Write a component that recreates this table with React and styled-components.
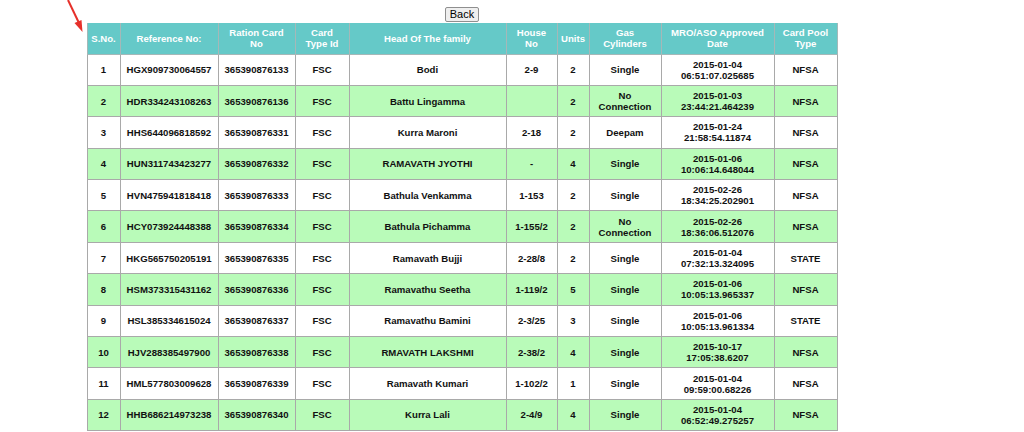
import styled, { createGlobalStyle } from 'styled-components'

const GlobalStyle = createGlobalStyle`
    body {
        margin: 0;
        background: #fff;
        font-family: "Liberation Sans", Arial, sans-serif;
    }
`

const Page = styled.div`
    position: relative;
    padding-top: 7px;
`
const Wrapper = styled.div`
    width: 750px;
    margin-left: 87px;
    display: flex;
    flex-direction: column;
    align-items: center;
`
const BackButton = styled.button`
    height: 15px;
    padding: 0 4px;
    margin-bottom: 1px;
    font-family: "Liberation Sans", Arial, sans-serif;
    font-size: 11px;
    line-height: 13px;
    color: #000;
    background: #efefef;
    border: 1px solid #8f8f8f;
    border-radius: 2px;
`
const Table = styled.table`
    width: 750px;
    table-layout: fixed;
    border-collapse: collapse;
    font-size: 9.6px;
    font-weight: bold;
    line-height: 11px;
`
const HeadRow = styled.tr`
    height: 31px;
    background: #65c9c8;
`
const Th = styled.th`
    padding: 0 2px;
    color: #fff;
    font-weight: bold;
    text-align: center;
    border: 1px solid #a5b8b8;
    border-top: none;
`
const Row = styled.tr`
    height: 31.4px;
    background: ${(p) => (p.$alt ? '#b9fbb9' : '#fff')};
`
const Td = styled.td`
    padding: 0 2px;
    color: #111;
    text-align: center;
    border: 1px solid #a9a9a9;
`
const Arrow = styled.svg`
    position: absolute;
    left: 60px;
    top: 0;
`

const widths = [33, 98, 77, 54, 157, 51, 32, 72, 113, 63]

const headers = [
    'S.No.',
    'Reference No:',
    ['Ration Card', 'No'],
    ['Card', 'Type Id'],
    'Head Of The family',
    ['House', 'No'],
    'Units',
    ['Gas', 'Cylinders'],
    ['MRO/ASO Approved', 'Date'],
    ['Card Pool', 'Type'],
]

const rows = [
    ['1', 'HGX909730064557', '365390876133', 'Bodi', '2-9', '2', 'Single', ['2015-01-04', '06:51:07.025685'], 'NFSA'],
    ['2', 'HDR334243108263', '365390876136', 'Battu Lingamma', '', '2', ['No', 'Connection'], ['2015-01-03', '23:44:21.464239'], 'NFSA'],
    ['3', 'HHS644096818592', '365390876331', 'Kurra Maroni', '2-18', '2', 'Deepam', ['2015-01-24', '21:58:54.11874'], 'NFSA'],
    ['4', 'HUN311743423277', '365390876332', 'RAMAVATH JYOTHI', '-', '4', 'Single', ['2015-01-06', '10:06:14.648044'], 'NFSA'],
    ['5', 'HVN475941818418', '365390876333', 'Bathula Venkamma', '1-153', '2', 'Single', ['2015-02-26', '18:34:25.202901'], 'NFSA'],
    ['6', 'HCY073924448388', '365390876334', 'Bathula Pichamma', '1-155/2', '2', ['No', 'Connection'], ['2015-02-26', '18:36:06.512076'], 'NFSA'],
    ['7', 'HKG565750205191', '365390876335', 'Ramavath Bujji', '2-28/8', '2', 'Single', ['2015-01-04', '07:32:13.324095'], 'STATE'],
    ['8', 'HSM373315431162', '365390876336', 'Ramavathu Seetha', '1-119/2', '5', 'Single', ['2015-01-06', '10:05:13.965337'], 'NFSA'],
    ['9', 'HSL385334615024', '365390876337', 'Ramavathu Bamini', '2-3/25', '3', 'Single', ['2015-01-06', '10:05:13.961334'], 'STATE'],
    ['10', 'HJV288385497900', '365390876338', 'RMAVATH LAKSHMI', '2-38/2', '4', 'Single', ['2015-10-17', '17:05:38.6207'], 'NFSA'],
    ['11', 'HML577803009628', '365390876339', 'Ramavath Kumari', '1-102/2', '1', 'Single', ['2015-01-04', '09:59:00.68226'], 'NFSA'],
    ['12', 'HHB686214973238', '365390876340', 'Kurra Lali', '2-4/9', '4', 'Single', ['2015-01-04', '06:52:49.275257'], 'NFSA'],
]

// two-line cells are given as arrays
function Lines({ value }) {
    if (!Array.isArray(value)) return value
    return value.map((line, i) => (
        <span key={i}>
            {i > 0 && <br />}
            {line}
        </span>
    ))
}

function App() {
    return (
        <Page>
            <GlobalStyle />
            <Arrow width="30" height="40" viewBox="0 0 30 40">
                <line x1="8" y1="0" x2="18.5" y2="22" stroke="#e6302a" strokeWidth="2" />
                <polygon points="22.5,32 14.5,23 21.5,20" fill="#e6302a" />
            </Arrow>
            <Wrapper>
                <BackButton>Back</BackButton>
                <Table>
                    <colgroup>
                        {widths.map((w, i) => (
                            <col key={i} style={{ width: w }} />
                        ))}
                    </colgroup>
                    <thead>
                        <HeadRow>
                            {headers.map((h, i) => (
                                <Th key={i}>
                                    <Lines value={h} />
                                </Th>
                            ))}
                        </HeadRow>
                    </thead>
                    <tbody>
                        {rows.map((r, i) => (
                            <Row key={r[0]} $alt={i % 2 === 1}>
                                <Td>{r[0]}</Td>
                                <Td>{r[1]}</Td>
                                <Td>{r[2]}</Td>
                                <Td>FSC</Td>
                                <Td>{r[3]}</Td>
                                <Td>{r[4]}</Td>
                                <Td>{r[5]}</Td>
                                <Td>
                                    <Lines value={r[6]} />
                                </Td>
                                <Td>
                                    <Lines value={r[7]} />
                                </Td>
                                <Td>{r[8]}</Td>
                            </Row>
                        ))}
                    </tbody>
                </Table>
            </Wrapper>
        </Page>
    )
}

export default App
